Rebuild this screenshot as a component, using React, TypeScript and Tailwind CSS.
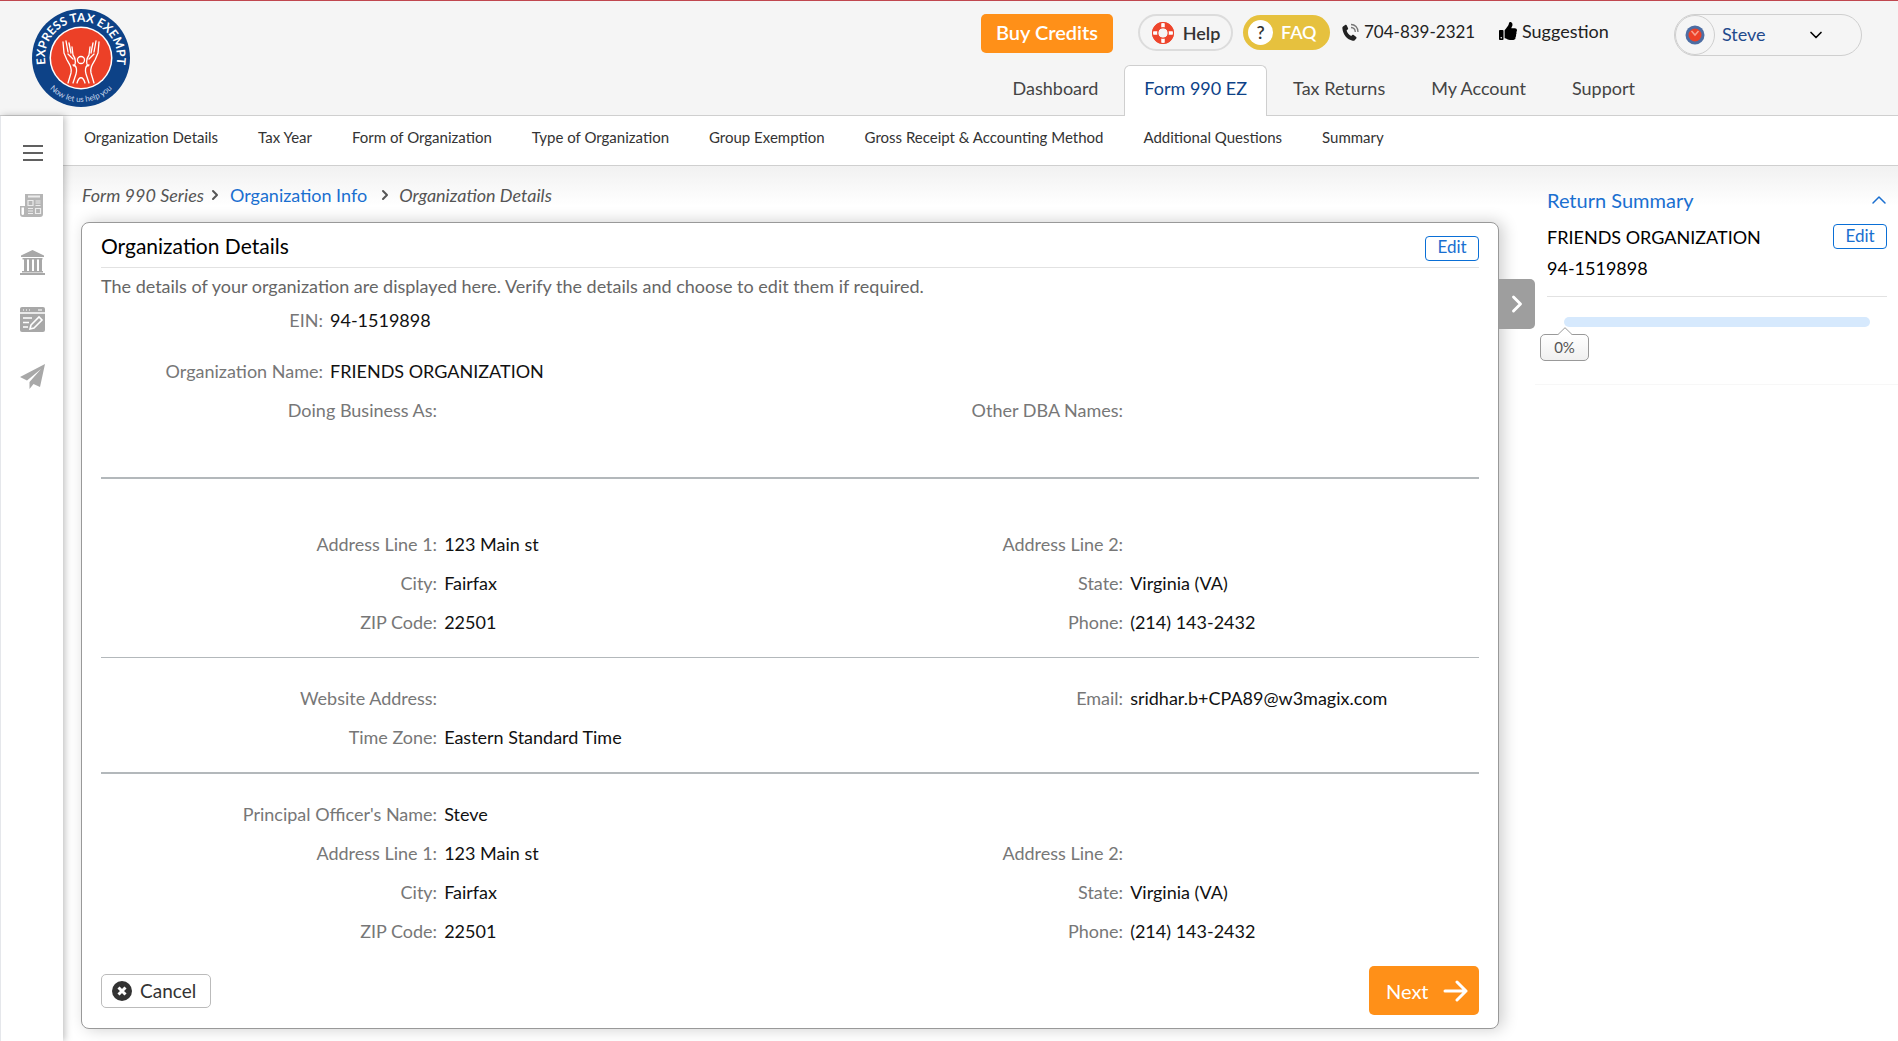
import { ChevronDown, ChevronRight, ChevronUp } from 'lucide-react';
import { FaThumbsUp } from 'react-icons/fa';

const tabs = ['Dashboard', 'Form 990 EZ', 'Tax Returns', 'My Account', 'Support'];

const steps = [
  'Organization Details',
  'Tax Year',
  'Form of Organization',
  'Type of Organization',
  'Group Exemption',
  'Gross Receipt & Accounting Method',
  'Additional Questions',
  'Summary',
];

function Logo() {
  return (
    <svg viewBox="0 0 98 98" className="h-[98px] w-[98px]" role="img" aria-label="Express Tax Exempt">
      <defs>
        <path id="logo-top" d="M20 70 A36 36 0 1 1 78 70" />
        <path id="logo-bottom" d="M8 63 A43 43 0 0 0 90 63" />
      </defs>
      <circle cx="49" cy="49" r="49" fill="#0d4287" />
      <circle cx="49" cy="49" r="31.500" fill="#fff" />
      <circle cx="49" cy="49" r="30" fill="#ec4027" />
      <text fill="#fff" fontSize="12" fontWeight="700" fontFamily="Lato, sans-serif" textAnchor="middle">
        <textPath href="#logo-top" startOffset="50%">EXPRESS TAX EXEMPT</textPath>
      </text>
      <text fill="#c4d4ea" fontSize="8" fontFamily="Lato, sans-serif" textAnchor="middle">
        <textPath href="#logo-bottom" startOffset="50%">Now let us help you</textPath>
      </text>
      <g fill="none" stroke="#fff" strokeWidth="1.3" strokeLinecap="round" strokeLinejoin="round">
        <circle cx="49" cy="51" r="3.5" />
        <path d="M31 33 l1 11 3 7 c3 5 5 8 4 13 l-3 10" />
        <path d="M67 33 l-1 11 -3 7 c-3 5 -5 8 -4 13 l3 10" />
        <path d="M34 32 l2 11 M37 34 l2 10 M40 38 l1 8 c3 4 3 9 1 11 M36 45 l5 5" />
        <path d="M64 32 l-2 11 M61 34 l-2 10 M58 38 l-1 8 c-3 4 -3 9 -1 11 M62 45 l-5 5" />
        <path d="M41 56 c4 0 4 6 3 9 l-3 9 M57 56 c-4 0 -4 6 -3 9 l3 9 M45 74 c2 -7 6 -7 8 0" />
      </g>
    </svg>
  );
}

function LifeRing() {
  return (
    <svg viewBox="0 0 24 24" className="h-6 w-6" fill="none" aria-hidden="true">
      <circle cx="12" cy="12" r="8" stroke="#ee452c" strokeWidth="6" />
      <path d="M12 2v4.500M12 17.500V22M2 12h4.500M17.500 12H22" stroke="#fff" strokeWidth="3.500" />
      <circle cx="12" cy="12" r="5.200" stroke="#ee452c" strokeWidth="1" />
      <circle cx="12" cy="12" r="10.500" stroke="#ee452c" strokeWidth="1" />
    </svg>
  );
}

function PhoneIcon() {
  return (
    <svg viewBox="0 0 18 18" className="h-[18px] w-[18px]" fill="none" aria-hidden="true">
      <path
        d="M1 3.500 3.500 1.800c.6-.3 1 0 1.300.6l1.300 2.800c.2.600 0 1-.500 1.400l-1 .8c.7 2.500 2.300 4.400 4.600 5.500l1-.9c.5-.4 1-.4 1.500 0l2.500 1.900c.5.500.5 1 .1 1.500l-1.800 2c-.5.400-1.100.5-1.800.300C5 16.500 1 11.500.400 5.500.300 4.600.400 4 1 3.500z"
        fill="#222"
      />
      <path d="M9 1.500c4 0 7 3 7 7.500M9 4.500c2.500.2 4.200 2 4.300 4.500" stroke="#777" strokeWidth="1.300" />
    </svg>
  );
}

function NewsIcon() {
  return (
    <svg viewBox="0 0 25 25" className="h-[25px] w-[25px]" aria-hidden="true">
      <path d="M5 1h18v20a3 3 0 0 1-3 3H3a3 3 0 0 1-3-3v-8h5z" fill="#b5b5b5" />
      <path d="M1.500 14.500H4V21a1.300 1.300 0 0 1-2.500 0z" fill="#fff" />
      <g fill="none" stroke="#ececec" strokeWidth="1.2">
        <path d="M8 3.500h12" strokeWidth="2" />
        <path d="M8 7.500h5v5H8zM15.500 8h5M15.500 10h5M15.500 12.500h5M8 15.500h5M8 18h5M8 20.500h5M15.500 15.500h5v5h-5z" />
      </g>
    </svg>
  );
}

function BankIcon() {
  return (
    <svg viewBox="0 0 25 25" className="h-[25px] w-[25px]" fill="#a8a8a8" aria-hidden="true">
      <path d="M12.500 0 24 5.500V7H1V5.500zM2.500 8h20v1.500h-20zM4 9.500h3V21H4zM9 9.500h3V21H9zM14 9.500h3V21h-3zM19 9.500h3V21h-3zM2 21h21v1.500H2zM0 23h25v2H0z" />
    </svg>
  );
}

function EditFormIcon() {
  return (
    <svg viewBox="0 0 25 25" className="h-[25px] w-[25px]" aria-hidden="true">
      <rect width="25" height="25" rx="2" fill="#a8a8a8" />
      <path d="M0 6h25" stroke="#fff" strokeWidth="1.500" />
      <path d="M3 3h1M6 3h1M9 3h1M18 3h4" stroke="#e5e5e5" strokeWidth="1.500" />
      <path d="M3 11h9M3 15.500h6M3 20h5" stroke="#fff" strokeWidth="1.600" />
      <path d="m11 18 8-8 3 3-8 8-4 1z" fill="#a8a8a8" stroke="#fff" strokeWidth="1.600" />
    </svg>
  );
}

function PlaneIcon() {
  return (
    <svg viewBox="0 0 25 25" className="h-[25px] w-[25px]" fill="#a8a8a8" aria-hidden="true">
      <path d="M25 0 0 13l7 3.500L21 5 9.500 18v7l4-5 6.500 3z" />
    </svg>
  );
}

function Sidebar() {
  return (
    <aside className="z-10 w-[63px] shrink-0 border-l border-gray-200 bg-white shadow-[2px_0_7px_rgba(0,0,0,0.25)]">
      <nav className="flex flex-col items-center gap-8 pt-[29px] pl-px">
        <button aria-label="Menu" className="flex h-4 w-5 flex-col justify-between">
          <span className="h-[2px] w-full bg-[#606060]" />
          <span className="h-[2px] w-full bg-[#606060]" />
          <span className="h-[2px] w-full bg-[#606060]" />
        </button>
        <a href="#news" aria-label="Forms"><NewsIcon /></a>
        <a href="#organization" aria-label="Organization"><BankIcon /></a>
        <a href="#edit" aria-label="Edit form"><EditFormIcon /></a>
        <a href="#transmit" aria-label="Transmit"><PlaneIcon /></a>
      </nav>
    </aside>
  );
}

function Header() {
  return (
    <header className="flex h-[116px] items-start border-t border-b border-t-[#c0474f] border-b-[#cfcfcf] bg-[#f5f5f5] pr-9 pl-8">
      <a href="#home" className="mt-2 block"><Logo /></a>
      <div className="ml-auto flex h-full flex-col justify-between">
        <div className="flex h-[52px] items-start justify-end pt-[13px] pr-11 text-lg text-[#222]">
          <button className="h-[39px] w-[132px] rounded-[5px] bg-[#ff9018] pb-1 text-xl font-semibold text-white">Buy Credits</button>
          <button className="ml-[25px] flex h-[37px] w-[95px] items-center justify-center gap-2 rounded-full border-2 border-[#dcdcdc] font-semibold text-[#333]">
            <LifeRing />
            Help
          </button>
          <button className="mt-px ml-[10px] flex h-[35px] w-[87px] items-center gap-2 rounded-full bg-[#e6c13e] pb-px pl-[5px] font-semibold text-white">
            <span className="flex h-[25px] w-[25px] items-center justify-center rounded-full bg-white text-[#333]">?</span>
            FAQ
          </button>
          <a href="tel:7048392321" className="ml-3 flex h-[37px] w-[157px] items-center gap-1 pb-px text-[17px]">
            <PhoneIcon />
            704-839-2321
          </a>
          <a href="#suggestion" className="flex h-[37px] w-[112px] items-center gap-[5px] pb-[3px]">
            <FaThumbsUp className="h-[18px] w-[18px] text-black" />
            Suggestion
          </a>
        </div>
        <nav className="-mb-px flex items-end justify-end gap-[6px]">
          {tabs.map((tab) => (
            <a
              key={tab}
              href="#tab"
              className={
                tab === 'Form 990 EZ'
                  ? 'flex h-[51px] items-center rounded-t-md border border-b-0 border-[#cfcfcf] bg-white px-[19px] pb-[6px] text-lg text-[#0d4287]'
                  : 'flex h-[51px] items-center px-5 pb-[6px] text-lg text-[#444]'
              }
            >
              {tab}
            </a>
          ))}
        </nav>
      </div>
      <button className="mt-[13px] ml-[19px] flex h-[42px] w-[188px] items-center rounded-full border border-[#cfcfcf] text-lg text-[#1f4a8c]">
        <span className="flex h-10 w-10 items-center justify-center rounded-full border border-[#cfcfcf]">
          <svg viewBox="0 0 20 20" className="h-5 w-5" aria-hidden="true">
            <circle cx="10" cy="10" r="9.500" fill="#4d6da3" />
            <circle cx="10" cy="10" r="6.500" fill="#ec4027" />
            <path d="m6.500 6 3.500 4 3.500-4" fill="none" stroke="#f7a08f" strokeWidth="1.500" />
          </svg>
        </span>
        <span className="ml-[7px] w-[84px] pb-[2px] text-left">Steve</span>
        <ChevronDown className="h-5 w-5 text-black" />
      </button>
    </header>
  );
}

type FieldProps = { label: string; value?: string; narrow?: boolean };

function Field({ label, value, narrow }: FieldProps) {
  return (
    <div className="flex h-[39px] items-center gap-[7px]">
      <dt className={narrow ? 'w-[222px] shrink-0 text-right text-[#777]' : 'w-[49%] shrink-0 text-right text-[#777]'}>{label}:</dt>
      <dd className="whitespace-nowrap text-[#111]">{value}</dd>
    </div>
  );
}

function OrganizationCard() {
  return (
    <section className="rounded-lg border border-[#999] bg-white px-[19px] pb-[13px] text-lg shadow-[4px_0_16px_rgba(0,0,0,0.2)]">
      <div className="flex h-[45px] items-center justify-between border-b border-[#e2e2e2]">
        <h1 className="pt-[2px] text-[21px] text-black">Organization Details</h1>
        <button className="mt-[6px] h-[25px] w-[54px] rounded-[4px] border border-[#0a6fd6] pb-[2px] text-[17px] leading-5 text-[#1a6fd0]">Edit</button>
      </div>
      <p className="mt-1 h-7 leading-7 text-[#666]">
        The details of your organization are displayed here. Verify the details and choose to edit them if required.
      </p>
      <dl>
        <Field narrow label="EIN" value="94-1519898" />
        <div className="h-3" />
        <Field narrow label="Organization Name" value="FRIENDS ORGANIZATION" />
        <div className="grid grid-cols-2 border-b-2 border-[#b3b8bb] pr-[6px] pb-12">
          <Field label="Doing Business As" />
          <Field label="Other DBA Names" />
        </div>
        <div className="grid grid-cols-2 border-b border-[#b3b8bb] pt-[45px] pr-[6px] pb-4">
          <Field label="Address Line 1" value="123 Main st" />
          <Field label="Address Line 2" />
          <Field label="City" value="Fairfax" />
          <Field label="State" value="Virginia (VA)" />
          <Field label="ZIP Code" value="22501" />
          <Field label="Phone" value="(214) 143-2432" />
        </div>
        <div className="grid grid-cols-2 border-b-2 border-[#b3b8bb] pt-5 pr-[6px] pb-4">
          <Field label="Website Address" />
          <Field label="Email" value="sridhar.b+CPA89@w3magix.com" />
          <Field label="Time Zone" value="Eastern Standard Time" />
        </div>
        <div className="grid grid-cols-2 pt-5 pr-[6px]">
          <Field label="Principal Officer's Name" value="Steve" />
          <div />
          <Field label="Address Line 1" value="123 Main st" />
          <Field label="Address Line 2" />
          <Field label="City" value="Fairfax" />
          <Field label="State" value="Virginia (VA)" />
          <Field label="ZIP Code" value="22501" />
          <Field label="Phone" value="(214) 143-2432" />
        </div>
      </dl>
      <div className="mt-4 flex items-center justify-between">
        <button className="flex h-[34px] w-[110px] items-center gap-2 rounded-[5px] border border-[#bbb] pl-[10px] text-[19px] text-[#333]">
          <svg viewBox="0 0 20 20" className="h-5 w-5" aria-hidden="true">
            <circle cx="10" cy="10" r="10" fill="#333" />
            <path d="m6.500 6.500 7 7M13.500 6.500l-7 7" stroke="#fff" strokeWidth="3" />
          </svg>
          Cancel
        </button>
        <button className="flex h-[49px] w-[110px] items-center justify-between rounded-[5px] bg-[#ff9018] pr-[10px] pl-[17px] text-xl text-white">
          Next
          <svg viewBox="0 0 26 22" className="h-[22px] w-[26px]" fill="none" stroke="#fff" strokeWidth="3" strokeLinecap="round" strokeLinejoin="round" aria-hidden="true">
            <path d="M2 11h21M14 2l9 9-9 9" />
          </svg>
        </button>
      </div>
    </section>
  );
}

function ReturnSummary() {
  return (
    <aside className="w-[363px] shrink-0 border-b border-[#f7f7f7] pt-5 pr-[11px] pl-3 text-lg text-black">
      <button className="flex h-7 w-full items-center justify-between text-xl text-[#1a6fd0]">
        Return Summary
        <ChevronUp className="-mr-1 h-6 w-6" strokeWidth={1.5} />
      </button>
      <div className="mt-[10px] flex h-[25px] items-center justify-between">
        <span>FRIENDS ORGANIZATION</span>
        <button className="h-[25px] w-[54px] rounded-[4px] border border-[#0a6fd6] pb-[2px] text-[17px] leading-5 text-[#1a6fd0]">Edit</button>
      </div>
      <p className="h-12 border-b border-[#e2e2e2] pt-[5px]">94-1519898</p>
      <div className="relative mx-[17px] mt-5 mb-[57px] h-[10px] rounded-full bg-[#d6e9fd]">
        <div className="absolute top-[17px] -left-6 flex h-[27px] w-[49px] items-center justify-center rounded-[5px] border border-[#999] bg-gradient-to-b from-white to-[#f0f0f0] text-[15px] text-[#555]">
          <svg viewBox="0 0 16 8" className="absolute -top-2 left-4 h-2 w-4" fill="#fff" stroke="#999" aria-hidden="true">
            <path d="M0.500 8 8 0.700 15.500 8" />
          </svg>
          0%
        </div>
      </div>
    </aside>
  );
}

export default function App() {
  return (
    <div className="flex min-h-screen flex-col bg-white font-['Lato','Open_Sans',sans-serif]">
      <Header />
      <div className="flex grow">
        <Sidebar />
        <div className="min-w-0 grow">
          <nav className="flex h-[50px] items-center gap-10 border-b border-[#cfcfcf] bg-white pb-[6px] pl-[21px] text-[15px] whitespace-nowrap text-[#333]">
            {steps.map((step) => (
              <a key={step} href="#step">{step}</a>
            ))}
          </nav>
          <div className="flex items-start bg-[linear-gradient(#f1f1f1,#fff_40px)]">
            <main className="min-w-0 grow pb-3 pl-[18px]">
              <div className="flex h-14 items-center gap-[6px] pt-px pl-px text-lg text-[#555]">
                <span className="italic">Form 990 Series</span>
                <ChevronRight className="-mx-[3px] h-4 w-4" strokeWidth={3} />
                <a href="#info" className="ml-1 text-[#1a6fd0]">Organization Info</a>
                <ChevronRight className="ml-1 h-4 w-4" strokeWidth={3} />
                <span className="italic">Organization Details</span>
              </div>
              <OrganizationCard />
            </main>
            <button aria-label="Collapse summary" className="mt-[113px] flex h-[50px] w-9 shrink-0 items-center justify-center rounded-r-[5px] bg-[#9e9e9e] text-white">
              <ChevronRight className="h-7 w-7" strokeWidth={2.5} />
            </button>
            <ReturnSummary />
          </div>
        </div>
      </div>
    </div>
  );
}
